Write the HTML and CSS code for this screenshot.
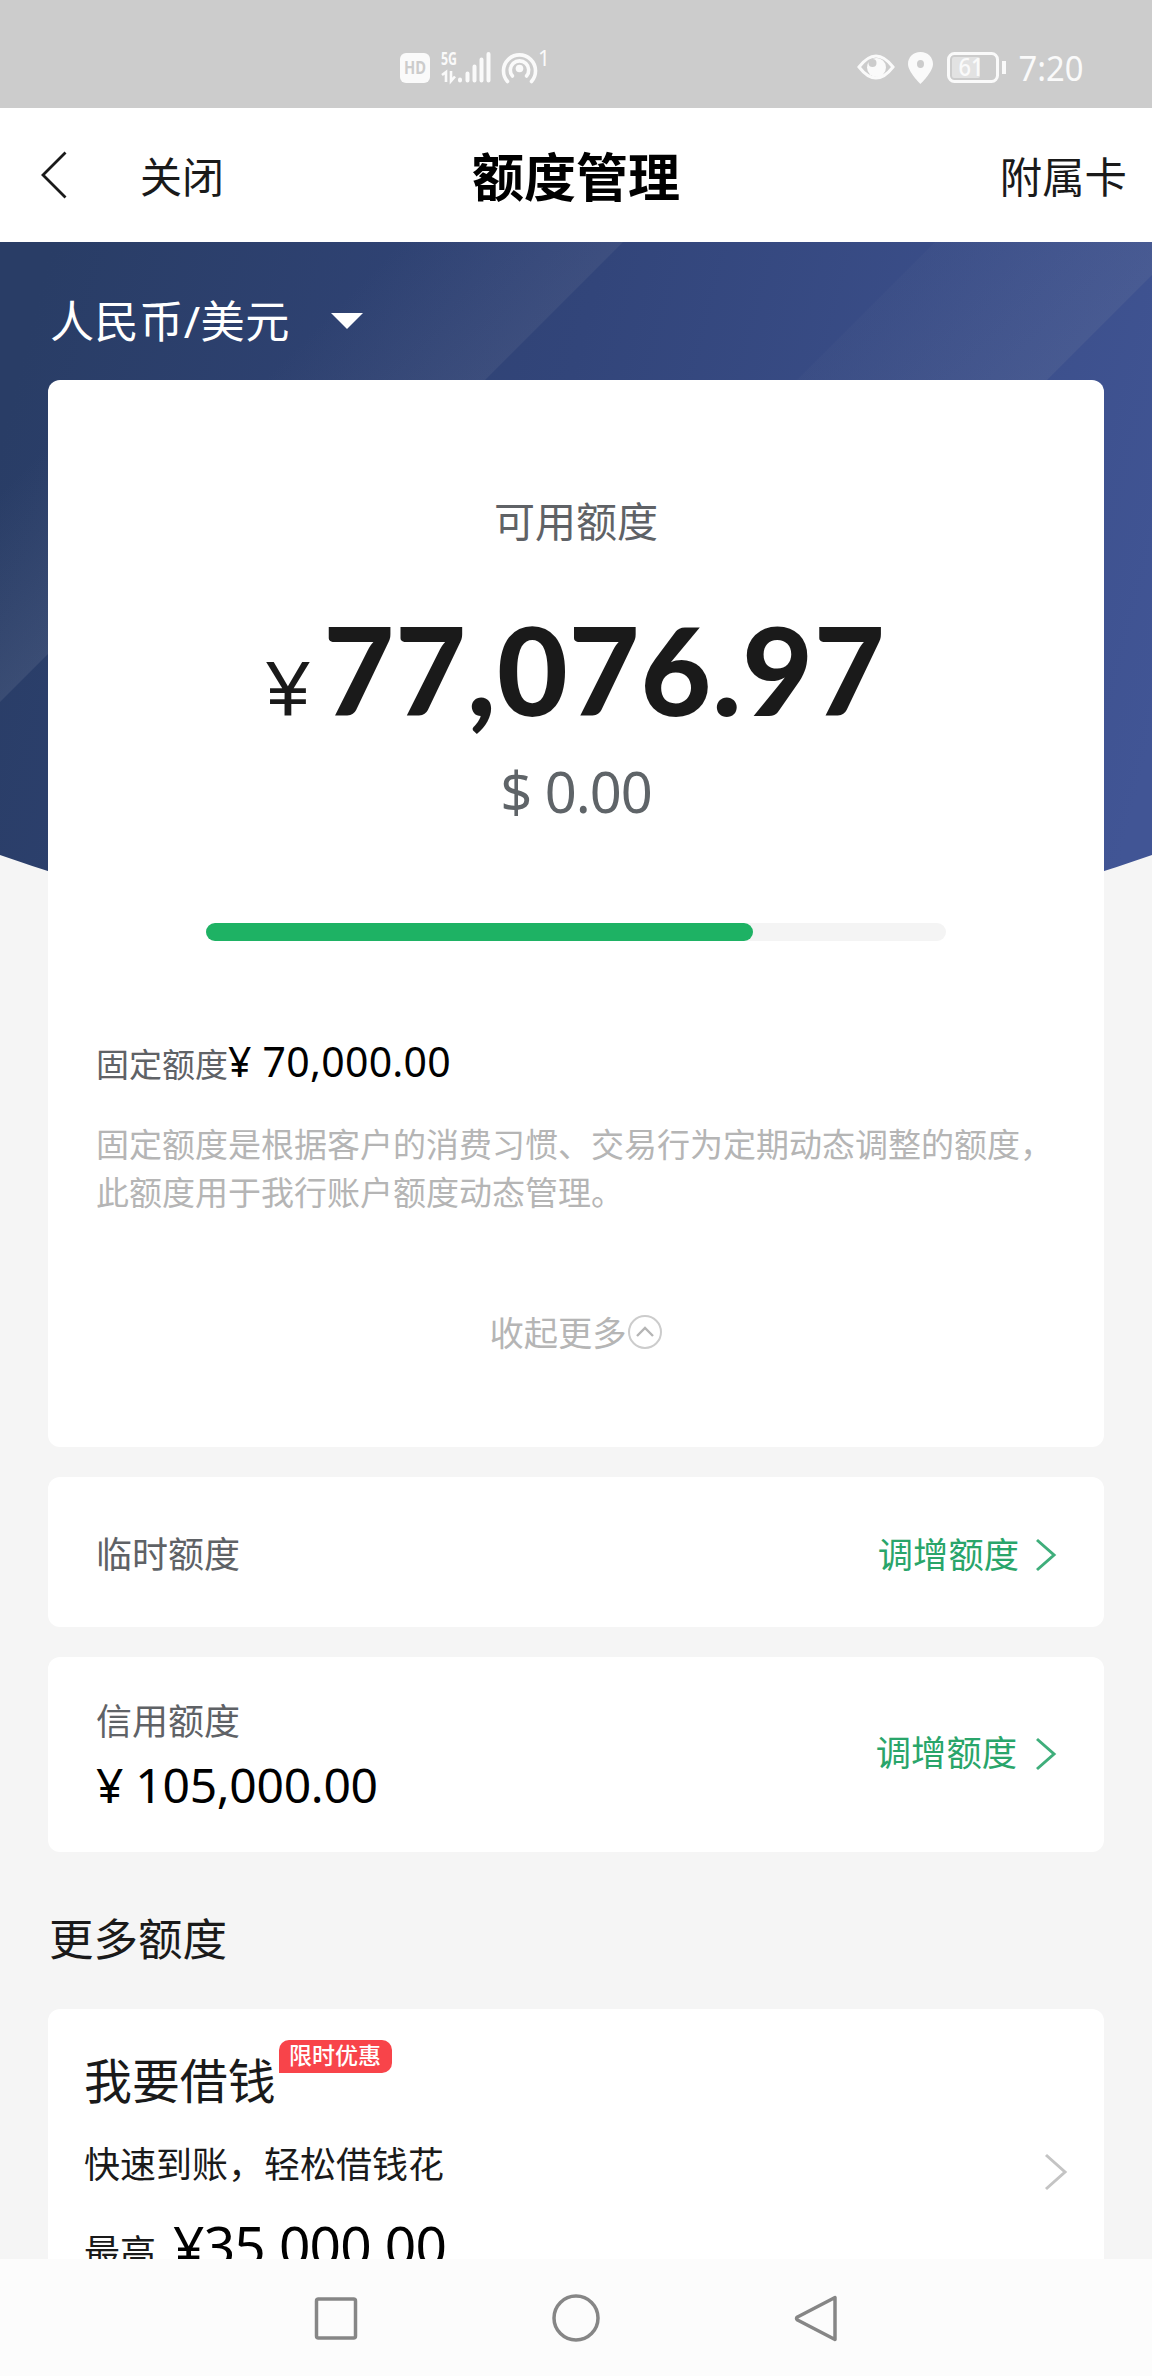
FILE: index.html
```html
<!DOCTYPE html>
<html lang="zh-CN">
<head>
<meta charset="utf-8">
<title>额度管理</title>
<link rel="stylesheet" href="styles.css">
</head>
<body>
<div class="phone">
  <div class="status">
    <svg class="status-left" width="152" height="40" viewBox="0 0 152 40">
      <rect x="0" y="5" width="30" height="30" rx="6" fill="#fafafa"/>
      <text x="15" y="26" text-anchor="middle" class="hd" textLength="22" lengthAdjust="spacingAndGlyphs">HD</text>
      <text x="41" y="17" class="fiveg" textLength="16" lengthAdjust="spacingAndGlyphs">5G</text>
      <path d="M42 27l4-3v10M51 23v10l4-4.500" fill="none" stroke="#fafafa" stroke-width="2.600"/>
      <g stroke="#fafafa" stroke-width="4" stroke-linecap="round"><path d="M60 31.500v1M67.500 25.500v7M74.500 18.500v14M81.500 11.500v21M88.500 6v26.500"/></g>
      <g fill="none" stroke="#fafafa" stroke-width="3.600" stroke-linecap="round">
        <path d="M107.500 33.500a16 16 0 1 1 24 0"/><path d="M112.500 28a9.200 9.200 0 1 1 14 0"/>
      </g>
      <circle cx="119.500" cy="20.500" r="3.800" fill="#fafafa"/>
      <text x="138" y="18" class="one">1</text>
    </svg>
    <svg class="status-right" width="230" height="40" viewBox="0 0 230 40">
      <path d="M2 19Q19 -3 36 19Q19 41 2 19Z" fill="none" stroke="#fafafa" stroke-width="3"/>
      <circle cx="19.500" cy="19.500" r="9.500" fill="#fafafa"/><circle cx="15.500" cy="15" r="4" fill="#ccc"/>
      <path fill-rule="evenodd" d="M63.500 4C56 4 51 9.500 51 16c0 8 12.500 20 12.500 20S76 24 76 16c0-6.500-5-12-12.500-12zm0 8a3.500 4 0 1 1 0 8a3.500 4 0 1 1 0-8z" fill="#fafafa"/>
      <rect x="91.500" y="5.500" width="49" height="28" rx="6" fill="none" stroke="#fafafa" stroke-width="3"/>
      <rect x="95" y="9" width="28" height="21" rx="2" fill="#e2e2e2"/>
      <text x="114" y="28" text-anchor="middle" class="battery" textLength="25" lengthAdjust="spacingAndGlyphs">61</text>
      <path d="M147 13v13" stroke="#fafafa" stroke-width="4"/>
      <text x="161.500" y="32.500" class="clock" textLength="65" lengthAdjust="spacingAndGlyphs">7:20</text>
    </svg>
  </div>

  <header class="header">
    <div class="header-left">
      <svg class="back" width="28" height="50" viewBox="0 0 28 50"><path d="M25.500 2.500L3 25l22.500 22.500" fill="none" stroke="#1a1a1a" stroke-width="2.800"/></svg>
      <span>关闭</span>
    </div>
    <h1 class="title">额度管理</h1>
    <span class="header-right">附属卡</span>
  </header>

  <main class="content">
    <svg class="hero" width="1152" height="720" viewBox="0 0 1152 720">
      <defs>
        <linearGradient id="base" gradientUnits="userSpaceOnUse" x1="0" y1="200" x2="1152" y2="500">
          <stop offset="0" stop-color="#293d66"/><stop offset=".45" stop-color="#32457a"/><stop offset="1" stop-color="#415595"/>
        </linearGradient>
        <linearGradient id="b1" gradientUnits="userSpaceOnUse" x1="200" y1="200" x2="311.500" y2="311.500">
          <stop offset="0" stop-color="#6a7594" stop-opacity="0"/><stop offset="1" stop-color="#6a7594" stop-opacity=".2"/>
        </linearGradient>
        <linearGradient id="b2" gradientUnits="userSpaceOnUse" x1="467.500" y1="467.500" x2="592.500" y2="592.500">
          <stop offset="0" stop-color="#7a86a0" stop-opacity=".05"/><stop offset="1" stop-color="#7a86a0" stop-opacity=".17"/>
        </linearGradient>
        <linearGradient id="b3" gradientUnits="userSpaceOnUse" x1="125" y1="125" x2="230" y2="230">
          <stop offset="0" stop-color="#7a86a0" stop-opacity="0"/><stop offset="1" stop-color="#7a86a0" stop-opacity=".2"/>
        </linearGradient>
      </defs>
      <path d="M0 0H1152V613Q576 815 0 613Z" fill="url(#base)"/>
      <path d="M400 0H623L485 138H262Z" fill="url(#b1)"/>
      <path d="M935 0H1152V33L1047 138H797Z" fill="url(#b2)"/>
      <path d="M0 250L60 190V400L0 460Z" fill="url(#b3)"/>
    </svg>

    <div class="currency">
      <span>人民币/美元</span>
      <svg width="32" height="16" viewBox="0 0 32 16"><path d="M0 0H32L16 16Z" fill="#fff"/></svg>
    </div>

    <section class="card summary">
      <div class="label">可用额度</div>
      <div class="balance"><span class="yen">¥</span><span class="big">77,076.97</span></div>
      <div class="usd">$ 0.00</div>
      <div class="bar"><div class="bar-fill" style="width:73.9%"></div></div>
      <div class="fixed"><span class="fixed-label">固定额度</span><span class="fixed-amount">¥ 70,000.00</span></div>
      <p class="desc">固定额度是根据客户的消费习惯、交易行为定期动态调整的额度，此额度用于我行账户额度动态管理。</p>
      <div class="collapse">
        <span>收起更多</span>
        <svg width="36" height="36" viewBox="0 0 36 36" fill="none"><circle cx="18" cy="18" r="16" stroke="#ccc" stroke-width="2"/><path d="M10 22l8-8 8 8" stroke="#b5b5b5" stroke-width="2.400"/></svg>
      </div>
    </section>

    <section class="card row temp">
      <span class="row-label">临时额度</span>
      <a class="action"><span>调增额度</span><svg width="22" height="34" viewBox="0 0 22 34"><path d="M2 2l17 15L2 32" fill="none" stroke="#3fae7b" stroke-width="3"/></svg></a>
    </section>

    <section class="card row credit">
      <div class="stack">
        <span class="row-label">信用额度</span>
        <span class="row-amount">¥ 105,000.00</span>
      </div>
      <a class="action"><span>调增额度</span><svg width="22" height="34" viewBox="0 0 22 34"><path d="M2 2l17 15L2 32" fill="none" stroke="#3fae7b" stroke-width="3"/></svg></a>
    </section>

    <h2 class="more">更多额度</h2>

    <section class="card loan">
      <div class="stack">
        <div class="loan-title"><span>我要借钱</span><span class="badge">限时优惠</span></div>
        <div class="loan-sub">快速到账，轻松借钱花</div>
        <div class="loan-max"><span class="max-label">最高</span><span class="max-amount">¥35,000.00</span></div>
      </div>
      <svg class="loan-arrow" width="24" height="38" viewBox="0 0 24 38"><path d="M2 2l19 17L2 36" fill="none" stroke="#c4c4c4" stroke-width="3"/></svg>
    </section>
  </main>

  <nav class="nav">
    <svg width="48" height="50" viewBox="0 0 48 50"><rect x="4.500" y="6" width="39" height="39" rx="2" fill="none" stroke="#868686" stroke-width="3.500"/></svg>
    <svg width="48" height="50" viewBox="0 0 48 50"><circle cx="24" cy="25" r="22" fill="none" stroke="#868686" stroke-width="3.500"/></svg>
    <svg width="48" height="50" viewBox="0 0 48 50"><path d="M43 4.500V46.500L5.500 27Q3.500 25.500 5.500 24Z" fill="none" stroke="#868686" stroke-width="3.500" stroke-linejoin="round"/></svg>
  </nav>
</div>
</body>
</html>
```
FILE: styles.css
```css
* { box-sizing: border-box; }

body {
  margin: 0;
  font-family: "Noto Sans", "Noto Sans CJK SC", sans-serif;
  color: #1a1a1a;
  background: #f5f5f5;
}

.phone {
  display: flex;
  flex-direction: column;
  width: 1152px;
  height: 2376px;
  overflow: hidden;
}

.phone svg { display: block; flex: none; overflow: visible; }

/* Status bar */
.status {
  display: flex;
  justify-content: space-between;
  height: 108px;
  flex: none;
  padding: 48px 65px 0 400px;
  background: #ccc;
}
.hd { font: 700 17px "Noto Sans", sans-serif; fill: #ccc; }
.fiveg { font: 700 18px "Noto Sans", sans-serif; fill: #fafafa; }
.one { font: 400 21px "Noto Sans", sans-serif; fill: #fafafa; }
.battery { font: 500 26px "Noto Sans", sans-serif; fill: #fafafa; }
.clock { font: 400 35px "Noto Sans", sans-serif; fill: #fafafa; }

/* Title bar */
.header {
  display: grid;
  grid-template-columns: 1fr auto 1fr;
  align-items: center;
  flex: none;
  height: 134px;
  padding: 0 25px 0 40px;
  background: #fff;
  font-family: "Noto Sans CJK SC", sans-serif;
  font-size: 42px;
  line-height: 60px;
}
.header-left { display: flex; align-items: center; gap: 72px; }
.title { margin: 0 0 0 -15px; font-size: 52px; font-weight: 700; color: #000; }
.header-right { justify-self: end; font-size: 42.400px; }

/* Scrolling area */
.content {
  position: relative;
  flex: none;
  height: 2017px;
  padding: 0 48px;
  overflow: hidden;
}
.hero { position: absolute; left: 0; top: 0; z-index: -1; }

.currency {
  display: flex;
  align-items: center;
  gap: 41px;
  height: 138px;
  padding: 18px 0 0 2px;
  color: #fff;
  font-size: 44.200px;
  letter-spacing: .4px;
}
.currency span { margin-top: -2px; }
.currency svg { margin-top: 1px; }

.card { background: #fff; border-radius: 12px; }

.summary {
  display: flex;
  flex-direction: column;
  height: 1067px;
  padding: 111px 48px 0;
}
.label { text-align: center; font-size: 41px; line-height: 60px; color: #5f6266; }
.balance {
  display: flex;
  align-items: baseline;
  justify-content: center;
  height: 150px;
  margin-top: 43px;
  gap: 14px;
  line-height: 150px;
}
.yen { font-family: "Liberation Sans", sans-serif; font-size: 78px; }
.big { font-family: Lato, sans-serif; font-weight: 900; font-size: 122px; letter-spacing: 1px; }
.usd { margin-top: 12px; text-align: center; font-size: 56px; line-height: 70px; letter-spacing: -1px; color: #5f6468; }
.bar {
  width: 740px;
  height: 18px;
  margin: 97px auto 0;
  border-radius: 9px;
  background: #f4f4f4;
}
.bar-fill { height: 100%; border-radius: 9px; background: #1eb264; }
.fixed { display: flex; align-items: baseline; margin: 90px 0 0; line-height: 60px; }
.fixed-label { font-size: 33px; color: #5f6266; }
.fixed-amount { font-size: 41px; letter-spacing: .25px; color: #000; }
.desc { margin: 26px -10px 0 0; font-size: 33px; line-height: 48px; color: #b5b5b5; }
.collapse {
  display: flex;
  justify-content: center;
  align-items: center;
  margin-top: 95px;
  height: 40px;
  font-size: 34.300px;
  color: #b5b5b5;
}
.collapse span { margin-top: -3px; }

.row { display: flex; align-items: center; justify-content: space-between; padding: 0 47px 0 48px; margin-top: 30px; }
.temp { height: 150px; padding-top: 6px; }
.credit { height: 195px; padding-top: 6px; }
.stack { display: flex; flex-direction: column; }
.row-label { font-size: 36px; line-height: 54px; color: #5f6266; }
.row-amount { font-size: 48px; line-height: 72px; letter-spacing: -.3px; color: #000; }
.action { display: flex; align-items: center; gap: 16px; font-size: 35.300px; color: #29a56a; }
.action span { margin-top: -6px; }
.credit .action { gap: 18px; margin-top: -8px; }

.more { margin: 57px 0 0 1px; font-size: 44.500px; line-height: 60px; font-weight: 400; }

.loan { display: flex; justify-content: space-between; height: 400px; margin-top: 40px; padding: 30px 36px 0; }
.loan-title { display: flex; align-items: flex-start; gap: 3px; font-size: 47.900px; line-height: 83px; }
.badge {
  width: 113px;
  height: 33px;
  margin-top: 1px;
  border-radius: 10px 10px 10px 0;
  background: #f8444a;
  color: #fff;
  font-size: 23px;
  font-weight: 500;
  line-height: 31px;
  text-align: center;
}
.loan-sub { margin-top: 13px; font-size: 36px; line-height: 60px; }
.loan-max { display: flex; align-items: baseline; gap: 17px; margin-top: 10px; line-height: 80px; }
.max-label { font-size: 36px; }
.max-amount { font-size: 55px; letter-spacing: -.8px; color: #000; }
.loan-arrow { margin-top: 114px; }

/* System navigation */
.nav {
  display: flex;
  justify-content: center;
  gap: 192px;
  flex: none;
  height: 117px;
  padding-top: 34px;
  background: #fcfcfc;
}
```
